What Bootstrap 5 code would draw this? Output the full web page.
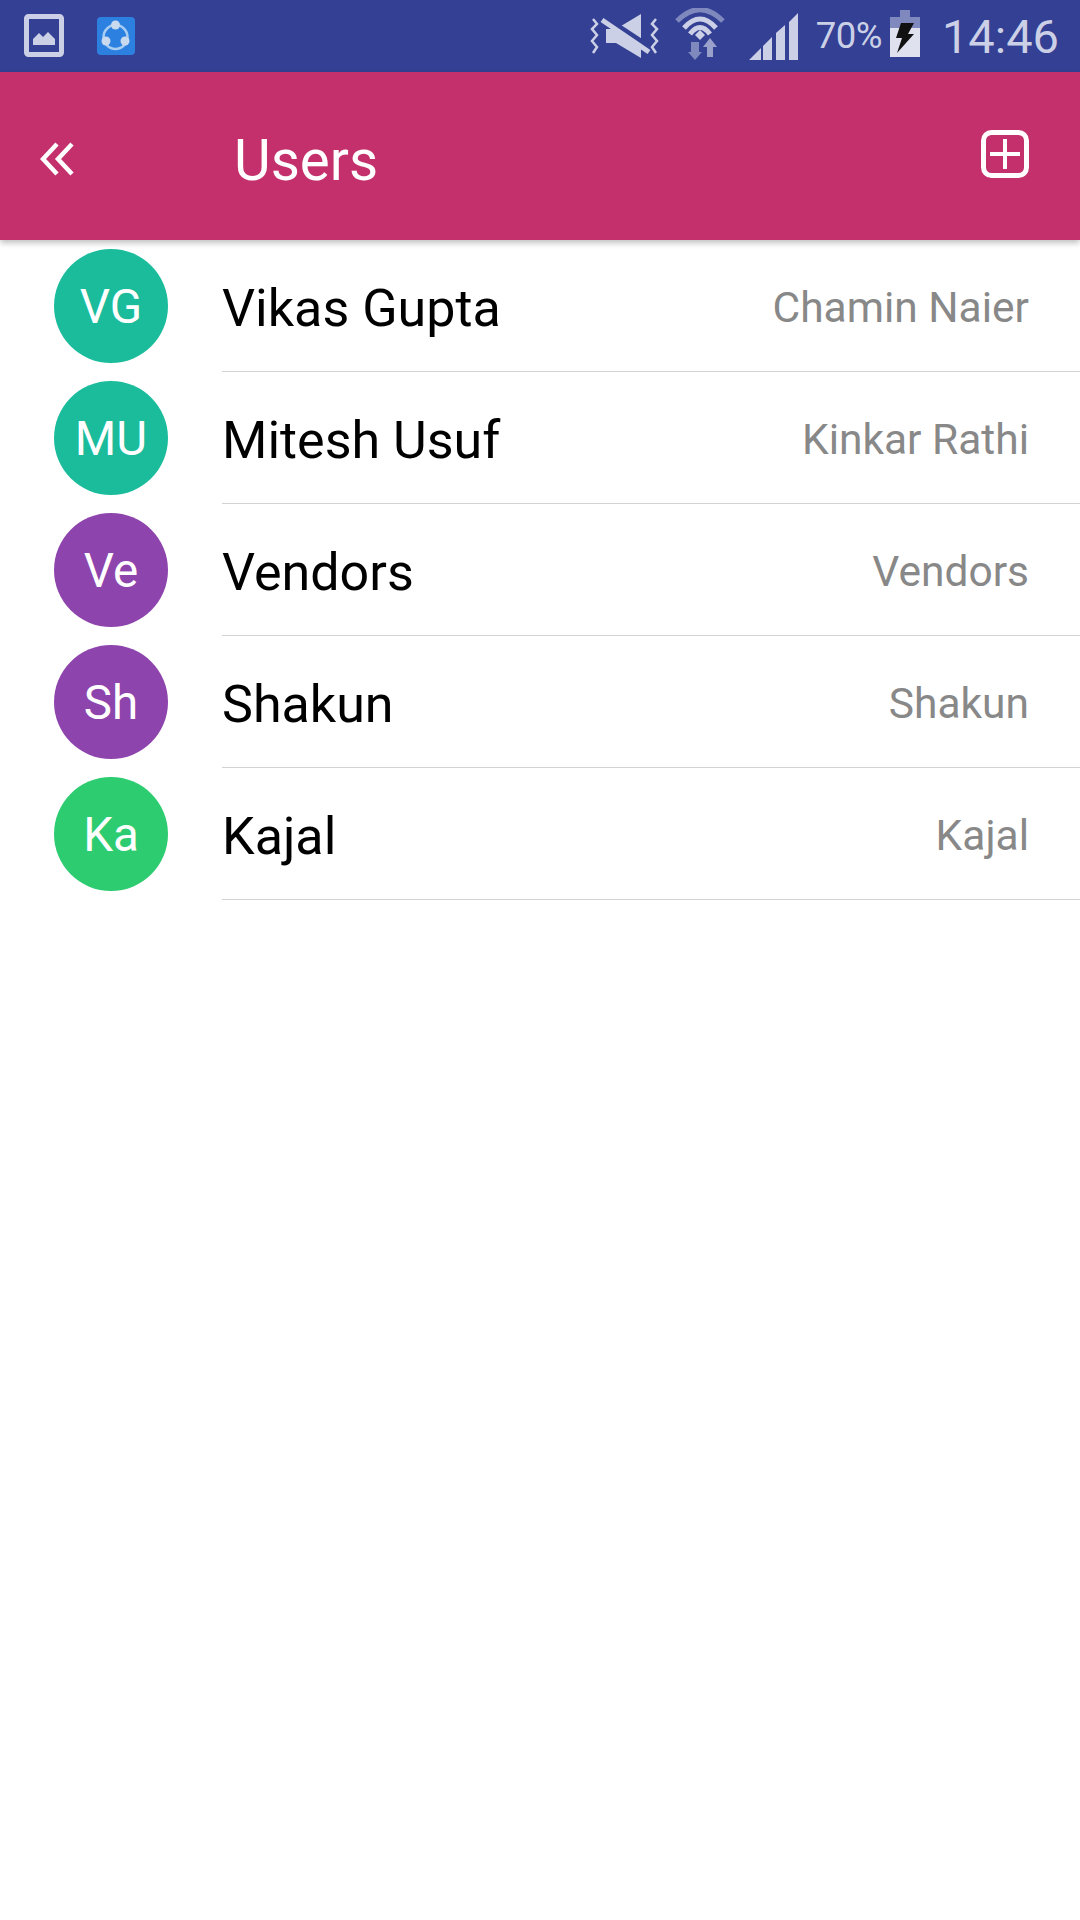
<!DOCTYPE html>
<html lang="en">
<head>
    <meta charset="UTF-8">
    <meta name="viewport" content="width=device-width, initial-scale=1.0">
    <title>Users</title>
    <link href="https://cdn.jsdelivr.net/npm/bootstrap@5.3.0/dist/css/bootstrap.min.css" rel="stylesheet">
    <style>
        body {
            background-color: #fff;
            font-family: Roboto, "Liberation Sans", sans-serif;
        }

        .status-strip {
            height: 72px;
            background-color: #334094;
            color: #ccd0e6;
            padding-right: 21px;
        }

        .status-icons svg {
            display: block;
        }

        .gallery-icon {
            margin-left: 24px;
            margin-bottom: 2px;
        }

        .share-icon {
            margin-left: 33px;
        }

        .mute-icon {
            margin-right: 15px;
        }

        .wifi-icon {
            margin-right: 24px;
        }

        .signal-icon {
            margin-right: 18px;
        }

        .batt-icon {
            margin-left: 8px;
            margin-right: 22px;
            margin-bottom: 5px;
        }

        .batt-pct {
            font-size: 36.5px;
            letter-spacing: -0.5px;
            line-height: 1;
        }

        .clock-text {
            font-size: 47px;
            line-height: 1;
        }

        .app-head {
            position: relative;
            height: 168px;
            background-color: #c4306b;
            color: #fff;
            box-shadow: 0 3px 6px rgba(0, 0, 0, .25);
        }

        .back-slot {
            width: 234px;
            padding-left: 40px;
            padding-top: 6px;
        }

        .head-title {
            font-size: 56.5px;
            line-height: 1;
            padding-top: 10px;
        }

        .add-slot {
            padding-right: 51px;
            padding-bottom: 4px;
        }

        .user-row {
            height: 132px;
        }

        .avatar-slot {
            width: 222px;
            padding-left: 54px;
        }

        .user-avatar {
            width: 114px;
            height: 114px;
            color: #fff;
            font-size: 47.5px;
            padding-top: 4px;
        }

        .row-body {
            border-bottom: 1px solid #d3d3d3;
            padding-right: 51px;
        }

        .user-name {
            font-size: 52px;
            color: #000;
            padding-top: 7px;
        }

        .user-group {
            font-size: 42.5px;
            color: #888;
            padding-top: 4px;
        }

        .av-teal { background-color: #1abc9c; }
        .av-purple { background-color: #8e44ad; }
        .av-green { background-color: #2ecc71; }
    </style>
</head>
<body>
    <div class="status-strip d-flex align-items-center justify-content-between status-icons">
        <div class="d-flex align-items-center">
            <svg class="gallery-icon" width="40" height="43" viewBox="0 0 40 43">
                <rect x="2.5" y="2.5" width="35" height="38" rx="2" fill="none" stroke="#ccd0e6" stroke-width="5"/>
                <path d="M9 31V25L15 19L19 23L24 18L31 25V31Z" fill="#ccd0e6"/>
            </svg>
            <svg class="share-icon" width="38" height="38" viewBox="0 0 38 38">
                <rect width="38" height="38" rx="4" fill="#2b80e0"/>
                <circle cx="18.5" cy="20" r="12" fill="none" stroke="#a9cdf2" stroke-width="2.5"/>
                <circle cx="18.5" cy="8" r="4.5" fill="#c9d9ee"/>
                <circle cx="9" cy="24" r="4.5" fill="#c9d9ee"/>
                <circle cx="28" cy="24" r="4.5" fill="#c9d9ee"/>
            </svg>
        </div>
        <div class="d-flex align-items-center">
            <svg class="mute-icon" width="70" height="46" viewBox="0 0 70 46">
                <path d="M3 6L7 11L2 16L7 22L2 28L7 34L3 40M66 6L62 11L67 16L62 22L67 28L62 34L66 40" fill="none" stroke="#ccd0e6" stroke-width="2.5"/>
                <path d="M16 16H26L51 1V45L26 30H16Z" fill="#ccd0e6"/>
                <path d="M13 3L60 34" stroke="#334094" stroke-width="5"/>
                <path d="M12 7L59 39" stroke="#ccd0e6" stroke-width="5"/>
            </svg>
            <svg class="wifi-icon" width="50" height="56" viewBox="0 0 50 56">
                <path d="M2 13Q25 -10 48 13" fill="none" stroke="#7f89bd" stroke-width="5"/>
                <path d="M9 20Q25 2 41 20" fill="none" stroke="#ccd0e6" stroke-width="5"/>
                <path d="M15 26Q25 13 35 26" fill="none" stroke="#ccd0e6" stroke-width="5"/>
                <path d="M20 27L25 22L30 27L25 32Z" fill="#ccd0e6"/>
                <path d="M16 34H24V44H27L20 52L13 44H16Z" fill="#7f89bd"/>
                <path d="M35 30L42 39H38V49H32V39H28Z" fill="#9aa2cc"/>
            </svg>
            <svg class="signal-icon" width="49" height="47" viewBox="0 0 49 47">
                <path d="M0 47L12 35V47ZM14 33L23 24V47H14ZM27 20L36 12V47H27ZM40 9L49 0V47H40Z" fill="#ccd0e6"/>
            </svg>
            <span class="batt-pct">70%</span>
            <svg class="batt-icon" width="30" height="47" viewBox="0 0 30 47">
                <rect x="10" y="0" width="10" height="7" fill="#7f89bd"/>
                <rect x="0" y="7" width="30" height="11" fill="#7f89bd"/>
                <rect x="0" y="18" width="30" height="29" fill="#dfe1ef"/>
                <path d="M11 13H24L18 24H24L7 43L12 28H6Z" fill="#111"/>
            </svg>
            <span class="clock-text">14:46</span>
        </div>
    </div>

    <header class="app-head d-flex align-items-center">
        <div class="back-slot">
            <svg class="d-block" width="34" height="34" viewBox="0 0 34 34">
                <path d="M17 2L3 17L17 32M32 2L18 17L32 32" fill="none" stroke="#fff" stroke-width="4.5"/>
            </svg>
        </div>
        <div class="head-title flex-grow-1">Users</div>
        <div class="add-slot">
            <svg class="d-block" width="48" height="48" viewBox="0 0 48 48">
                <rect x="2.5" y="2.5" width="43" height="43" rx="8" fill="none" stroke="#fff" stroke-width="5"/>
                <path d="M24 9V39M9 24H39" stroke="#fff" stroke-width="4"/>
            </svg>
        </div>
    </header>

    <main class="d-flex flex-column">
        <div class="user-row d-flex">
            <div class="avatar-slot d-flex align-items-center">
                <div class="user-avatar av-teal rounded-circle d-flex align-items-center justify-content-center">VG</div>
            </div>
            <div class="row-body flex-grow-1 d-flex align-items-center justify-content-between">
                <span class="user-name">Vikas Gupta</span>
                <span class="user-group">Chamin Naier</span>
            </div>
        </div>
        <div class="user-row d-flex">
            <div class="avatar-slot d-flex align-items-center">
                <div class="user-avatar av-teal rounded-circle d-flex align-items-center justify-content-center">MU</div>
            </div>
            <div class="row-body flex-grow-1 d-flex align-items-center justify-content-between">
                <span class="user-name">Mitesh Usuf</span>
                <span class="user-group">Kinkar Rathi</span>
            </div>
        </div>
        <div class="user-row d-flex">
            <div class="avatar-slot d-flex align-items-center">
                <div class="user-avatar av-purple rounded-circle d-flex align-items-center justify-content-center">Ve</div>
            </div>
            <div class="row-body flex-grow-1 d-flex align-items-center justify-content-between">
                <span class="user-name">Vendors</span>
                <span class="user-group">Vendors</span>
            </div>
        </div>
        <div class="user-row d-flex">
            <div class="avatar-slot d-flex align-items-center">
                <div class="user-avatar av-purple rounded-circle d-flex align-items-center justify-content-center">Sh</div>
            </div>
            <div class="row-body flex-grow-1 d-flex align-items-center justify-content-between">
                <span class="user-name">Shakun</span>
                <span class="user-group">Shakun</span>
            </div>
        </div>
        <div class="user-row d-flex">
            <div class="avatar-slot d-flex align-items-center">
                <div class="user-avatar av-green rounded-circle d-flex align-items-center justify-content-center">Ka</div>
            </div>
            <div class="row-body flex-grow-1 d-flex align-items-center justify-content-between">
                <span class="user-name">Kajal</span>
                <span class="user-group">Kajal</span>
            </div>
        </div>
    </main>

    <script src="https://cdn.jsdelivr.net/npm/bootstrap@5.3.0/dist/js/bootstrap.bundle.min.js"></script>
</body>
</html>
